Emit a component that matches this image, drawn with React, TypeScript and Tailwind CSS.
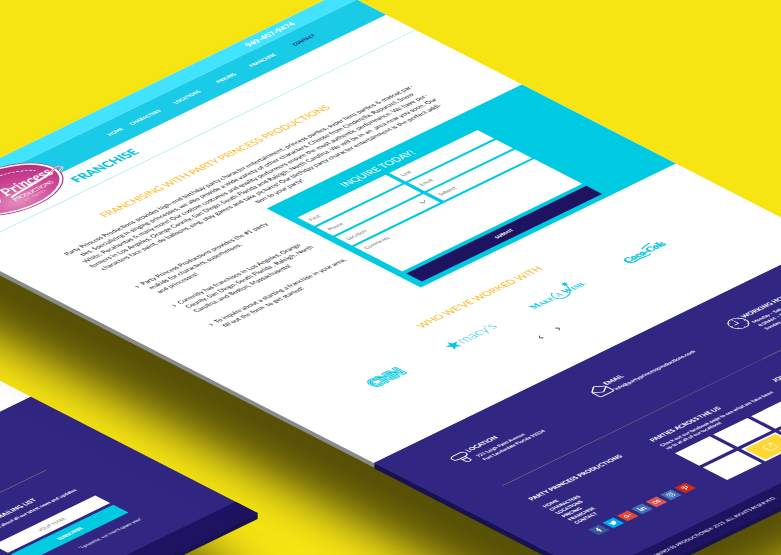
import type { ReactNode } from "react";
import { ChevronDown, ChevronLeft, ChevronRight, MailOpen, SquareArrowOutUpRight } from "lucide-react";
import {
  FaFacebookF,
  FaGooglePlusG,
  FaInstagram,
  FaLastfm,
  FaLinkedinIn,
  FaPinterestP,
  FaTwitter,
} from "react-icons/fa";

const FIELD =
  "h-[37px] w-full appearance-none rounded-none border-0 bg-white px-2 text-[11px] text-[#6b6b6b] placeholder:text-[#6b6b6b] outline-none";

/* Thickness of the slabs: stacked copies that run straight down on screen. */
const GREY_EDGE =
  "shadow-[-2px_2px_0_#8b8b8d,-4px_4px_0_#8b8b8d,-6px_6px_0_#8b8b8d,-8px_8px_0_#8b8b8d,-10px_10px_0_#8b8b8d]";
const NAVY_EDGE =
  "shadow-[-2px_2px_0_#1a1352,-4px_4px_0_#1a1352,-6px_6px_0_#1a1352,-8px_8px_0_#1a1352,-10px_10px_0_#1a1352,-12px_12px_0_#1a1352]";

const NAV = ["HOME", "CHARACTERS", "LOCATIONS", "PRICING", "FRANCHISE", "CONTACT"];

const INTRO = [
  "Party Princess Productions provides high-end birthday party character entertainment, princess parties, super hero parties & mascot par-",
  "ties. Specializing in singing princesses, we also provide a wide variety of other characters. Choose from Cinderella, Rapunzel, Snow",
  "White, Pocahontas & many more! Our custom costumes and quality performers ensure the most authentic performance. We have per-",
  "formers in Los Angeles, Orange County, San Diego, South Florida and Raleigh, North Carolina. We will be in an  area near you soon. Our",
  "characters face paint, do balloons, sing, play games and take pictures! Our birthday party character entertainment is the perfect addi-",
  "tion to your party!",
];

const POINTS = [
  ["Party Princess Productions provides the #1 party", "makids for characters, superheroes,", "and princesses!"],
  [
    "Currently has franchises in Los Angeles, Orange",
    "County, San Diego, South Florida , Raleigh, North",
    "Carolina, and Boston, Massachusetts!",
  ],
  ["To inquire about a starting a franchise in your area,", "fill out the form  to get started!"],
];

const SOCIAL = [
  { name: "Facebook", color: "bg-[#3b5998]", icon: <FaFacebookF /> },
  { name: "Twitter", color: "bg-[#00aced]", icon: <FaTwitter /> },
  { name: "Google Plus", color: "bg-[#dd4b39]", icon: <FaGooglePlusG /> },
  { name: "LinkedIn", color: "bg-[#4473b4]", icon: <FaLinkedinIn /> },
  { name: "Last.fm", color: "bg-[#dc5559]", icon: <FaLastfm /> },
  { name: "Instagram", color: "bg-[#4473b4]", icon: <FaInstagram /> },
  { name: "Pinterest", color: "bg-[#cb2a1c]", icon: <FaPinterestP /> },
];

function Logo() {
  return (
    <svg viewBox="0 0 216 132" className="absolute left-[92px] top-[14px] h-[132px] w-[216px]" aria-label="Party Princess Productions">
      <defs>
        <radialGradient id="pink" cx="40%" cy="80%" r="80%">
          <stop offset="0" stopColor="#e48dbd" />
          <stop offset="0.5" stopColor="#cf4a97" />
          <stop offset="1" stopColor="#b52b7d" />
        </radialGradient>
      </defs>
      <ellipse cx="101" cy="66" rx="100" ry="65" fill="#b8327f" />
      <ellipse cx="101" cy="66" rx="98" ry="63" fill="#fff" />
      <ellipse cx="101" cy="66" rx="93" ry="59" fill="url(#pink)" />
      <path d="M60 38C90 16 140 20 172 52" fill="none" stroke="#fff" strokeWidth="2" strokeDasharray="5 2" />
      <text x="188" y="78" textAnchor="end" fill="#fff" stroke="#fff" strokeWidth="0.8" fontSize="31" fontStyle="italic" fontFamily="Liberation Serif, serif">
        Party Princess
      </text>
      <path d="M84 86C120 78 150 84 190 71C212 63 216 76 198 80" fill="none" stroke="#fff" strokeWidth="4" />
      <path d="M186 72C212 63 216 76 198 80" fill="none" stroke="#c03a8a" strokeWidth="1.5" />
      <text x="124" y="99" textAnchor="middle" fill="#fff" fontSize="12" fontFamily="Lato, sans-serif">
        PRODUCTIONS
      </text>
      <text x="116" y="110" textAnchor="middle" fill="#e6c3d8" fontSize="8" fontFamily="Lato, sans-serif">
        EST. PARTIES
      </text>
    </svg>
  );
}

function Header() {
  return (
    <header>
      <div className="flex h-[34px] items-center justify-end bg-[#41e3ff] pr-[124px] text-base font-black text-white">
        <a href="tel:9494079474">949-407-9474</a>
      </div>
      <nav className="flex h-[65px] items-center justify-end bg-[#1acbe8] pr-[107px]">
        <ul className="grid grid-cols-[56px_76px_110px_64px_98px_86px] text-center text-[10px] font-black text-white">
          {NAV.map((item) => (
            <li key={item} className={item === "CONTACT" ? "text-[#1d1361]" : ""}>
              <a href="#top">{item}</a>
            </li>
          ))}
        </ul>
      </nav>
      <div className="h-[66px] border-b border-[#6fdfec] pl-[284px] pt-[16px] text-[25px] leading-7 font-black text-[#00c6df]">
        <h1>FRANCHISE</h1>
      </div>
      <Logo />
    </header>
  );
}

function InquiryForm() {
  return (
    <form className="h-[342px] w-[567px] bg-[#00cae1] pl-[15px] pt-4" onSubmit={(e) => e.preventDefault()}>
      <h2 className="w-[400px] text-center text-xl leading-7 text-white">INQUIRE TODAY!</h2>
      <div className="mt-[9px] grid w-[400px] grid-cols-2 gap-x-2 gap-y-[5px]">
        <input aria-label="First" placeholder="First" className={FIELD} />
        <input aria-label="Last" placeholder="Last" className={FIELD} />
        <input aria-label="Phone" placeholder="Phone" className={FIELD} />
        <input aria-label="Email" placeholder="Email" className={FIELD} />
        <div className="relative">
          <select aria-label="Location" className={FIELD}>
            <option>Location</option>
          </select>
          <ChevronDown className="absolute right-2 top-2 size-5 text-[#6b6b6b]" strokeWidth={1.5} />
        </div>
        <input aria-label="Subject" placeholder="Subject" className={FIELD} />
        <textarea
          aria-label="Comments"
          placeholder="Comments"
          className="col-span-2 h-[107px] w-full resize-none bg-white px-2 py-2 text-[11px] text-[#6b6b6b] placeholder:text-[#6b6b6b] outline-none"
        />
      </div>
      <button className="mt-[9px] flex h-[35px] w-[400px] items-center justify-center bg-[#1d1361] text-[10px] font-black text-white">
        SUBMIT
      </button>
    </form>
  );
}

function Clients() {
  return (
    <section className="mr-8 mt-[70px]">
      <h2 className="text-center text-xl leading-7 text-[#fdb913]">WHO WE&apos;VE WORKED WITH</h2>
      <div className="mx-auto mt-11 grid w-[760px] grid-cols-4 place-items-center text-[#00c6df]">
        <svg viewBox="0 0 76 34" className="h-[34px] w-[76px]" role="img" aria-label="CNN">
          <text x="38" y="28" textAnchor="middle" fontSize="31" fontWeight="900" fontFamily="Lato, sans-serif" fill="currentColor" stroke="currentColor" strokeWidth="5" strokeLinejoin="round">
            CNN
          </text>
          <text x="38" y="28" textAnchor="middle" fontSize="31" fontWeight="900" fontFamily="Lato, sans-serif" fill="none" stroke="#fff" strokeWidth="1">
            CNN
          </text>
        </svg>
        <svg viewBox="0 0 110 34" className="h-[34px] w-[110px]" aria-label="macy's">
          <path d="M13 5l3 9h10l-8 6 3 10-8-6-8 6 3-10-8-6h10z" fill="currentColor" />
          <text x="27" y="26" fontSize="27" fontWeight="300" fontFamily="Lato, sans-serif" fill="currentColor">
            macy&apos;s
          </text>
        </svg>
        <svg viewBox="0 0 130 40" className="h-10 w-[130px]" aria-label="Make-A-Wish">
          <text x="4" y="29" fontSize="19" fontWeight="700" fontFamily="Liberation Serif, serif" fill="currentColor">
            <tspan>M</tspan>
            <tspan fontSize="14">AKE</tspan>
          </text>
          <text x="60" y="29" fontSize="17" fontStyle="italic" fontFamily="Liberation Serif, serif" fill="currentColor">
            A
          </text>
          <text x="75" y="29" fontSize="19" fontWeight="700" fontFamily="Liberation Serif, serif" fill="currentColor">
            <tspan>W</tspan>
            <tspan fontSize="14">ISH.</tspan>
          </text>
          <path d="M62 12C50 18 52 36 68 36S92 22 96 7M96 1v10M91 6h10M92 2l8 8M100 2l-8 8" fill="none" stroke="currentColor" strokeWidth="1.8" />
        </svg>
        <svg viewBox="0 0 90 40" className="h-10 w-[90px]" aria-label="Coca-Cola">
          <text x="49" y="27" textAnchor="middle" fontSize="20" fontStyle="italic" fontWeight="700" fontFamily="Liberation Serif, serif" fill="currentColor" stroke="currentColor" strokeWidth="1">
            Coca-Cola
          </text>
          <path d="M8 18C3 32 14 34 24 31S44 36 52 31M52 12C58 6 66 10 74 6" fill="none" stroke="currentColor" strokeWidth="2.5" />
        </svg>
      </div>
      <div className="mt-[50px] flex justify-center gap-6 text-[#222]">
        <button aria-label="Previous">
          <ChevronLeft className="size-4" strokeWidth={2} />
        </button>
        <button aria-label="Next">
          <ChevronRight className="size-4" strokeWidth={2} />
        </button>
      </div>
    </section>
  );
}

function Contact({ icon, title, children }: { icon: ReactNode; title: string; children: ReactNode }) {
  return (
    <div className="flex">
      {icon}
      <div>
        <h3 className="text-[13px] leading-4 font-black">{title}</h3>
        <div className="mt-2 leading-[14px] font-bold">{children}</div>
      </div>
    </div>
  );
}

function Footer({ compact = false }: { compact?: boolean }) {
  return (
    <footer className={`relative bg-[#312783] text-white ${NAVY_EDGE}`}>
      <div className={`ml-[96px] w-[768px] ${compact ? "pt-[56px]" : "pt-[66px]"}`}>
        <div className="grid h-[124px] grid-cols-[306px_306px_156px] border-b border-[#a0967a] whitespace-nowrap">
          <Contact
            icon={
              <svg viewBox="0 0 32 32" className="size-9 shrink-0 fill-none stroke-current stroke-2">
                <path d="M8 4h13c6 0 9 5 6 9-2 3-5 3-7 3v12c-3 2-7 2-9 0V16H8c-5 0-7-3-7-6s3-6 7-6zM11 16h9M11 20h9" />
              </svg>
            }
            title="LOCATION"
          >
            <div className="text-[10px]">
              <p>721 Leigh Palm Avenue</p>
              <p>Fort Lauderdale Florida 33324</p>
            </div>
          </Contact>
          <Contact icon={<MailOpen className="size-9 shrink-0" strokeWidth={1.5} />} title="EMAIL">
            <p className="text-[11px]">info@partyprincessproductions.com</p>
          </Contact>
          <Contact
            icon={
              <svg viewBox="0 0 24 24" className="size-9 shrink-0 fill-none stroke-current" strokeWidth="1.2" strokeLinecap="round">
                <circle cx="12" cy="12" r="11" />
                <path d="M12 5v7H7" />
                <path d="M12 2.5v.5M12 21v.5M2.5 12H3M21 12h.5M18.5 5.5l.2-.2M18.5 18.5l.2.2M5.5 18.5l-.2.2M5.5 5.5l-.2-.2" />
              </svg>
            }
            title="WORKING HOURS"
          >
            <div className="text-[10px]">
              <p>Monday – Saturday</p>
              <p>8:30AM – 8:00PM</p>
              <p>Sunday – Closed</p>
            </div>
          </Contact>
        </div>
        <div className={`grid grid-cols-[269px_272px_227px] ${compact ? "h-[275px] pt-[44px]" : "h-[295px] pt-[52px]"}`}>
          <div>
            <h3 className="text-[13px] leading-4 font-black">PARTY PRINCESS PRODUCTIONS</h3>
            <ul className="mt-4 text-[10px] leading-[14px] font-black">
              {NAV.map((item) => (
                <li key={item}>
                  <a href="#top">{item}</a>
                </li>
              ))}
            </ul>
            <div className="mt-[22px] flex gap-2">
              {SOCIAL.map((s) => (
                <a key={s.name} href="#top" aria-label={s.name} className={`flex size-6 items-center justify-center text-sm ${s.color}`}>
                  {s.icon}
                </a>
              ))}
            </div>
          </div>
          <div>
            <h3 className="text-[13px] leading-4 font-black">PARTIES ACROSS THE US</h3>
            <p className="mt-2 text-[10px] leading-3 font-bold whitespace-nowrap">
              Check out our facebook page to see what we have been
              <br />
              up to at all of our locations!
            </p>
            <div className="mt-[14px] grid w-[246px] grid-cols-3 gap-2">
              {[0, 1, 2, 3, 4, 5].map((n) => (
                <a key={n} href="#top" aria-label={`Party photo ${n + 1}`} className="h-[54px] bg-white p-1">
                  {n === 4 && (
                    <span className="flex h-full items-center justify-center bg-[#fdd835]">
                      <SquareArrowOutUpRight className="size-6" strokeWidth={1.2} />
                    </span>
                  )}
                </a>
              ))}
            </div>
          </div>
          <form onSubmit={(e) => e.preventDefault()}>
            <h3 className="text-[13px] leading-4 font-black">JOIN OUR MAILING LIST</h3>
            <p className="mt-2 text-[10px] leading-3 font-bold whitespace-nowrap">
              Learn more about all our latest news and updates
            </p>
            <input
              aria-label="Your email"
              placeholder="YOUR EMAIL"
              className="mt-[29px] block h-[33px] w-full bg-white text-center text-[10px] text-[#666] placeholder:text-[#777] outline-none"
            />
            <button className="mt-[7px] h-[34px] w-full bg-[#00cae1] text-[10px] font-black">SUBSCRIBE</button>
            <p className="mt-[20px] text-right text-[10px] leading-3">*I promise, we won&apos;t spam you!</p>
          </form>
        </div>
      </div>
      <div className="flex h-[50px] items-center bg-[#1d1361] pl-[70px] text-[10px]">
        © PARTY PRINCESS PRODUCTIONS® 2015. ALL RIGHTS RESERVED.
      </div>
    </footer>
  );
}

export default function App() {
  return (
    <main className="relative h-screen overflow-hidden bg-[#f7e413] [font-family:Lato,'Open_Sans',sans-serif]">
      <div className="absolute left-0 top-0 w-[1010px] origin-top-left [transform:matrix(0.45,-0.219,0.45,0.231,-924,361)] shadow-[-150px_130px_90px_rgba(0,0,0,0.65)]">
        <div className={`h-[1112px] bg-white ${GREY_EDGE}`} />
        <Footer compact />
      </div>

      <div className="absolute left-0 top-0 w-[1010px] origin-top-left [transform:matrix(0.45,-0.219,0.45,0.231,-113,213)] shadow-[-150px_130px_90px_rgba(0,0,0,0.65)]">
        <div className={`relative h-[1082px] bg-white ${GREY_EDGE}`}>
          <Header />
          <section className="mr-8 pt-[60px] text-center">
            <h2 className="text-xl leading-7 text-[#fdb913]">FRANCHISING WITH PARTY PRINCESS PRODUCTIONS</h2>
            <p className="ml-[14px] mt-[23px] text-[13px] leading-[18px] whitespace-pre text-[#111]">{INTRO.join("\n")}</p>
          </section>
          <div className="mt-[17px] flex">
            <ul className="flex w-[443px] flex-col gap-7 pl-[116px] pt-[23px] text-[13px] leading-[18px] whitespace-pre text-[#111]">
              {POINTS.map((lines) => (
                <li key={lines[0]} className="flex items-start gap-1">
                  <ChevronRight className="mt-[5px] size-3 shrink-0 text-[#312783]" />
                  <span>{lines.join("\n")}</span>
                </li>
              ))}
            </ul>
            <InquiryForm />
          </div>
          <Clients />
        </div>
        <Footer />
      </div>
    </main>
  );
}
